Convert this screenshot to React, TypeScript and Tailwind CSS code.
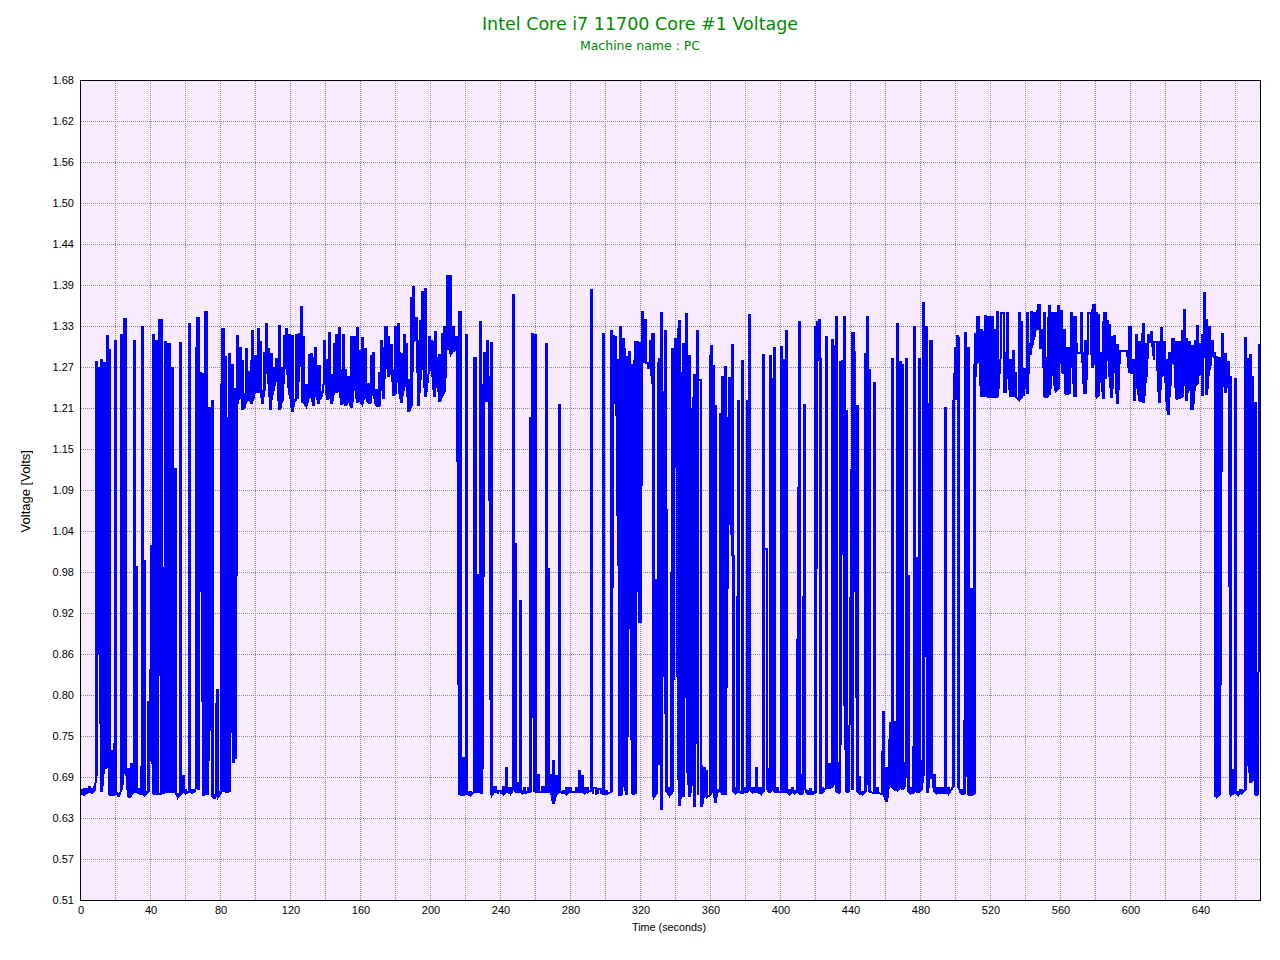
type Bar = number[];

// crops of the trace: [left, right, top, bottom], x in 1/3 px, y in 1/2.9 px from y=270
const A: Bar[] = [
  [0,8,1510,1522],[8,16,1506,1524],[16,24,1508,1518],[24,32,1502,1516],[32,40,1506,1518],[40,46,1500,1512],
  [45,52,268,1470],[46,56,880,1115],[55,62,285,1115],[60,70,262,1515],[68,76,270,1445],[76,80,820,1445],[78,86,193,820],[85,92,232,1525],
  [92,100,1395,1525],[98,106,1375,1525],[102,112,207,1510],[112,120,1520,1530],[120,128,190,1510],[128,135,143,1450],[132,140,143,1450],
  [140,146,1450,1530],[146,152,1490,1530],[150,160,1435,1520],[160,168,207,1515],[166,172,862,1515],[172,182,1508,1520],[181,187,1443,1520],
  [183,191,166,1520],[190,196,845,1525],[196,203,1515,1522],[201,208,1255,1515],[207,213,1160,1340],[210,218,800,1340],[216,224,190,1520],
  [224,236,207,1520],[239,246,146,1520],[235,243,146,830],[246,252,865,1520],[252,262,210,1515],[262,272,216,1515],[272,281,285,1515],
  [281,288,577,1515],[288,297,1520,1530],[297,306,212,1520],[306,312,1470,1515],[312,322,1510,1518],[324,332,158,1515],[332,345,1510,1518],
  [345,352,225,1505],[349,359,140,320],[352,358,320,1510],[357,365,300,415],[365,373,303,1528],[372,385,123,400],[376,386,400,1525],
  [386,393,400,1145],[393,401,381,1530],[400,406,1525,1535],[405,412,1260,1525],[408,418,1220,1530],[418,424,1515,1522],[421,428,333,1515],
  [424,434,172,885],[430,440,253,1515],[440,447,430,1515],[444,452,245,1515],[452,460,277,855],[456,462,855,1430],[460,470,345,1420],
  [468,476,193,390],[476,486,225,340],[483,490,265,405],[488,495,360,400],[495,503,228,380],[503,510,295,375],
];

const B: Bar[] = [
  [0,4,265,388],[3,13,178,380],[13,20,250,355],[21,30,170,355],[26,33,210,355],[32,41,352,390],[40,46,240,350],[45,54,158,255],[50,57,230,330],
  [56,62,300,405],[60,69,245,378],[67,74,285,350],[74,84,258,295],[84,92,162,405],[92,100,285,380],[100,108,192,285],[105,113,170,285],
  [113,122,188,362],[122,130,192,412],[130,136,378,382],[136,146,190,375],[143,150,185,280],[150,158,108,280],[153,165,195,385],[165,173,335,395],
  [173,180,248,365],[180,187,245,370],[185,193,255,395],[192,200,227,345],[200,208,278,388],[205,212,280,378],[210,218,355,370],[219,227,205,320],
  [227,234,262,378],[234,243,184,360],[241,248,305,388],[249,256,215,355],[255,263,190,355],[264,274,167,350],[270,277,290,392],[277,283,188,380],
  [283,290,290,395],[290,298,310,380],[300,309,195,400],[309,318,195,335],[318,327,168,385],[325,334,235,380],[333,339,198,390],[338,344,255,370],
  [342,350,228,370],[350,358,330,385],[358,363,365,385],[361,369,250,345],[367,374,240,365],[374,382,348,395],[384,392,300,395],[391,399,205,310],
  [396,404,225,375],[403,413,165,260],[410,418,195,312],[419,427,218,285],[426,431,290,365],[432,440,165,360],[440,447,158,240],[444,450,240,360],
  [450,458,305,385],[454,462,245,365],[460,466,190,340],[466,473,215,320],[471,479,320,412],[479,487,82,395],[487,496,50,205],[494,502,140,200],
  [502,510,205,395],[506,514,148,320],[513,522,65,265],[522,531,55,370],[533,541,195,290],[541,547,205,290],[548,556,210,370],[553,561,180,310],
  [561,566,255,355],[564,572,248,382],[572,578,185,365],[578,586,165,355],[589,598,18,195],[598,605,18,243],[605,615,165,235],[616,624,195,232],
  [624,636,123,1525],[636,642,1418,1525],[645,654,190,1520],[654,666,1516,1525],[670,680,255,1515],[677,682,885,1515],[682,692,1505,1518],
  [687,696,152,515],[690,698,515,1520],[694,703,335,1450],[700,708,240,380],[708,716,205,380],[712,720,310,380],[720,728,213,1525],[730,740,1500,1515],
  [740,757,1513,1518],[757,764,1500,1520],[765,773,1447,1515],[775,785,1505,1518],[786,794,72,1510],[793,798,795,1515],[798,804,1490,1515],
  [807,813,962,1515],[813,820,1512,1518],[820,826,1505,1518],[830,838,1503,1515],[838,846,430,1515],[843,852,187,1080],[848,860,190,1515],
  [860,870,1465,1515],[872,885,1500,1515],[885,893,215,1515],[892,897,868,1515],[897,905,1465,1515],[907,915,1425,1550],[915,922,1468,1520],
  [925,933,393,1515],[935,945,1513,1518],[945,952,1505,1520],[955,965,1503,1515],[975,980,1503,1515],[985,992,1453,1515],[992,997,1470,1515],
  [998,1005,1505,1518],[1008,1014,1505,1515],
];

const C: Bar[] = [
  [0,6,58,1510],[6,20,1505,1522],[20,36,1508,1518],[36,43,186,1520],[44,55,1512,1520],[60,68,178,1515],[66,74,192,390],[72,80,195,275],
  [80,88,262,860],[86,94,166,1525],[84,100,385,1525],[96,105,200,385],[100,108,228,1500],[105,115,252,1525],[113,122,238,880],[122,128,275,1520],
  [129,137,265,1520],[133,141,210,1520],[137,148,210,395],[145,155,212,1025],[153,163,122,255],[160,170,145,270],[170,180,285,270],[177,186,207,285],
  [183,194,187,330],[186,196,330,1530],[196,204,900,1520],[201,208,270,1360],[205,213,258,1300],[210,218,126,1568],[215,223,355,820],[222,230,178,1290],
  [226,234,697,1515],[234,240,1505,1525],[240,247,880,1520],[243,252,230,1515],[252,260,200,270],[260,266,170,1480],[264,272,148,1555],[272,276,300,1480],
  [276,286,215,1530],[285,294,128,415],[288,298,415,1460],[294,302,250,1530],[302,306,403,1490],[306,314,372,435],[310,318,305,1560],[318,326,178,855],
  [322,335,320,1525],[330,338,1440,1560],[338,346,1445,1525],[346,354,1455,1530],[357,366,250,1525],[360,369,222,1515],[366,374,280,1515],[372,378,395,1548],
  [378,386,1510,1515],[387,395,418,1510],[393,401,310,1525],[401,410,283,680],[401,408,680,1525],[409,417,430,925],[414,423,313,575],[422,431,218,830],
  [427,432,830,1515],[432,440,1505,1518],[438,446,950,1515],[441,449,380,1515],[452,461,265,1518],[461,466,1505,1515],[468,476,380,1515],[474,482,130,1510],
  [482,494,1505,1515],[495,503,1445,1515],[503,510,1505,1518],
];

const D: Bar[] = [
  [0,6,1505,1520],[6,14,247,1515],[10,23,810,1500],[22,28,1450,1515],[27,36,250,1515],[33,40,315,1510],[39,48,227,1515],[48,58,1505,1515],[60,70,224,1515],
  [68,76,262,1515],[75,84,178,1515],[84,92,1510,1520],[92,100,1505,1515],[100,108,1512,1518],[108,113,1075,1515],[111,116,632,1075],[114,122,150,1520],
  [122,128,1465,1520],[126,131,950,1500],[129,137,393,1505],[138,146,1513,1520],[146,152,1508,1520],[152,160,1515,1520],[162,168,165,1518],[168,175,150,260],
  [173,181,146,258],[177,184,258,1520],[184,192,1505,1515],[195,204,194,1505],[204,210,1433,1505],[213,222,203,1500],[219,226,220,1475],[225,234,135,1515],
  [234,243,1432,1518],[237,246,268,1380],[243,250,265,325],[246,252,325,795],[249,258,135,1265],[254,262,408,1515],[262,270,1490,1515],[272,284,183,395],
  [273,278,395,1510],[278,286,238,395],[288,295,395,1515],[295,303,1472,1520],[303,310,1515,1520],[313,319,245,1515],[318,327,137,1475],[324,333,290,1515],
  [339,348,327,1518],[348,356,1505,1518],[363,368,1400,1520],[366,374,1283,1525],[374,384,1445,1545],[384,392,1365,1495],[388,396,1315,1495],[393,402,258,1505],
  [400,407,1312,1510],[407,416,158,1510],[416,423,267,1505],[422,430,277,1510],[430,437,1432,1500],[434,443,258,1430],[441,448,888,1515],[448,456,1505,1518],
  [456,463,1385,1518],[459,468,165,835],[464,470,835,1515],[474,483,258,1515],[480,490,1425,1510],[486,495,95,1470],[493,504,165,795],[497,505,390,1518],
  [507,518,205,1465],[518,525,1465,1515],[525,532,1503,1518],[532,540,1503,1518],[540,552,1503,1518],[552,561,402,1518],[561,570,1505,1518],[575,581,380,1500],
  [578,585,303,375],[582,590,225,375],[587,594,193,375],[592,600,197,1505],[600,608,1510,1522],[609,615,1310,1520],[612,620,184,1310],[620,630,225,1525],
  [628,640,925,1525],[638,644,275,1520],[643,650,185,310],[648,660,135,235],
];

const E: Bar[] = [
  [0,5,175,370],[3,10,215,300],[10,14,180,370],[12,22,133,175],[18,26,135,370],[26,34,135,370],[34,42,135,370],[42,50,175,370],[48,58,123,370],
  [60,75,125,238],[70,80,240,358],[78,87,125,278],[86,93,262,370],[90,95,280,300],[96,104,236,370],[100,112,298,370],[114,122,125,378],[120,130,150,370],
  [117,135,290,365],[130,138,288,300],[138,148,125,360],[145,155,215,248],[150,160,122,225],[158,168,125,195],[168,175,118,125],[172,182,103,175],[178,186,175,228],
  [184,190,175,195],[190,198,125,370],[197,204,255,370],[201,206,140,255],[205,214,105,362],[212,222,125,290],[222,232,125,350],[230,240,105,345],[236,248,120,205],
  [243,250,175,300],[250,258,175,300],[253,262,225,360],[262,272,225,360],[270,280,125,215],[278,290,135,370],[285,295,215,240],[300,308,125,240],[308,315,240,360],
  [312,320,205,360],[320,336,125,210],[334,342,115,285],[337,347,103,180],[346,352,125,370],[352,358,130,365],[358,362,240,290],[365,374,150,375],[370,380,125,315],
  [378,385,148,215],[384,390,160,310],[390,398,195,372],[398,405,193,270],[407,416,218,390],[416,445,235,235],[445,455,165,300],[455,463,260,300],[460,468,260,380],
  [465,473,190,310],[473,483,210,380],[483,488,185,380],[487,495,158,385],[495,500,215,310],[502,510,190,210],[510,518,180,210],[518,535,210,260],[535,543,210,385],
  [541,549,168,310],[549,558,210,300],[558,563,260,410],[562,567,372,420],[565,570,240,370],[573,586,200,240],[586,594,210,375],[594,602,210,372],[602,610,178,370],
  [608,618,117,290],[616,625,200,380],[625,630,210,290],[630,634,335,405],[634,642,220,405],[642,648,205,335],[648,656,162,330],[656,664,215,240],[663,670,190,365],
  [669,678,68,145],[675,685,145,362],[685,693,165,290],[693,700,205,240],[700,703,240,255],[703,713,253,1530],[714,722,255,1525],[724,732,187,290],[732,740,245,358],
  [740,748,268,300],[748,754,310,1525],[754,762,1452,1522],[762,772,315,1518],[770,778,1515,1525],[778,790,1510,1518],[791,800,198,1510],[797,806,258,1372],
  [806,815,248,1490],[812,820,310,1480],[818,824,385,1480],[823,828,385,1525],[828,834,1445,1525],[833,839,218,830],
];

const crops: [number, Bar[]][] = [[80, A], [250, B], [590, C], [760, D], [980, E]];

// every bar becomes up/across/down on whole pixels, so a stroke of 2 gives 3px columns
function tracePoints() {
  const pts: string[] = [];
  for (const [ox, bars] of crops) {
    for (const [l, r, top, bottom] of bars) {
      const left = ox + l / 3;
      const right = ox + r / 3;
      const x0 = Math.round(left + 1);
      const x1 = Math.max(x0 + 1, Math.round(right - 1));
      const yt = Math.round(270 + top / 2.903);
      const yb = Math.round(270 + bottom / 2.903);
      pts.push(`${x0},${yb} ${x0},${yt} ${x1},${yt} ${x1},${yb}`);
    }
  }
  return pts.join(" ");
}

const yTicks = ["1.68","1.62","1.56","1.50","1.44","1.39","1.33","1.27","1.21","1.15","1.09","1.04","0.98","0.92","0.86","0.80","0.75","0.69","0.63","0.57","0.51"];
const xTicks = [0,40,80,120,160,200,240,280,320,360,400,440,480,520,560,600,640];
const vLines = Array.from({ length: 33 }, (_, i) => 115.5 + i * 35);
const hLines = Array.from({ length: 19 }, (_, i) => 121.5 + i * 41);

export default function App() {
  return (
    <div className="w-[1280px] h-[960px] bg-white overflow-hidden font-['Liberation_Sans',Arial,sans-serif] text-black">
      <header className="h-[60px] pt-[12px] text-center text-[#008a00] font-['DejaVu_Sans',Verdana,sans-serif]">
        <h1 className="text-[17.5px] leading-[24px] font-normal">Intel Core i7 11700 Core #1 Voltage</h1>
        <p className="text-[12.5px] leading-[19px]">Machine name : PC</p>
      </header>

      <div className="flex">
        <div className="w-[33px] h-[861px] flex items-center justify-end">
          <span className="[writing-mode:vertical-lr] rotate-180 text-[13px] leading-[14px] pb-[1px]">Voltage [Volts]</span>
        </div>
        <div className="w-[41px] flex flex-col items-end">
          {yTicks.map((t) => (
            <div key={t} className="h-[41px] flex items-center text-[11px] leading-none">{t}</div>
          ))}
        </div>
        <svg
          className="ml-[6px] mt-[20px] block"
          width={1182}
          height={822}
          viewBox="80 80 1182 822"
        >
          <rect x={80} y={80} width={1181} height={821} fill="#f8ebff" />
          <g stroke="#8f8496" strokeWidth={1} strokeDasharray="1 1" shapeRendering="crispEdges">
            {vLines.map((x) => <line key={x} x1={x} y1={81} x2={x} y2={900} />)}
            {hLines.map((y) => <line key={y} x1={81} y1={y} x2={1260} y2={y} />)}
          </g>
          <polyline points={tracePoints()} fill="none" stroke="#0000ff" strokeWidth={2} strokeLinejoin="miter" shapeRendering="crispEdges" />
          <rect x={80.5} y={80.5} width={1180} height={820} fill="none" stroke="#000" strokeWidth={1} shapeRendering="crispEdges" />
        </svg>
      </div>

      <div className="flex pl-[46px] mt-[-17px] text-[11px] leading-[13px] h-[13px]">
        {xTicks.map((t) => (
          <div key={t} className="w-[70px] text-center">{t}</div>
        ))}
      </div>
      <div className="pl-[58px] mt-[4px] text-center text-[10.8px] leading-[12px]">Time (seconds)</div>
    </div>
  );
}
